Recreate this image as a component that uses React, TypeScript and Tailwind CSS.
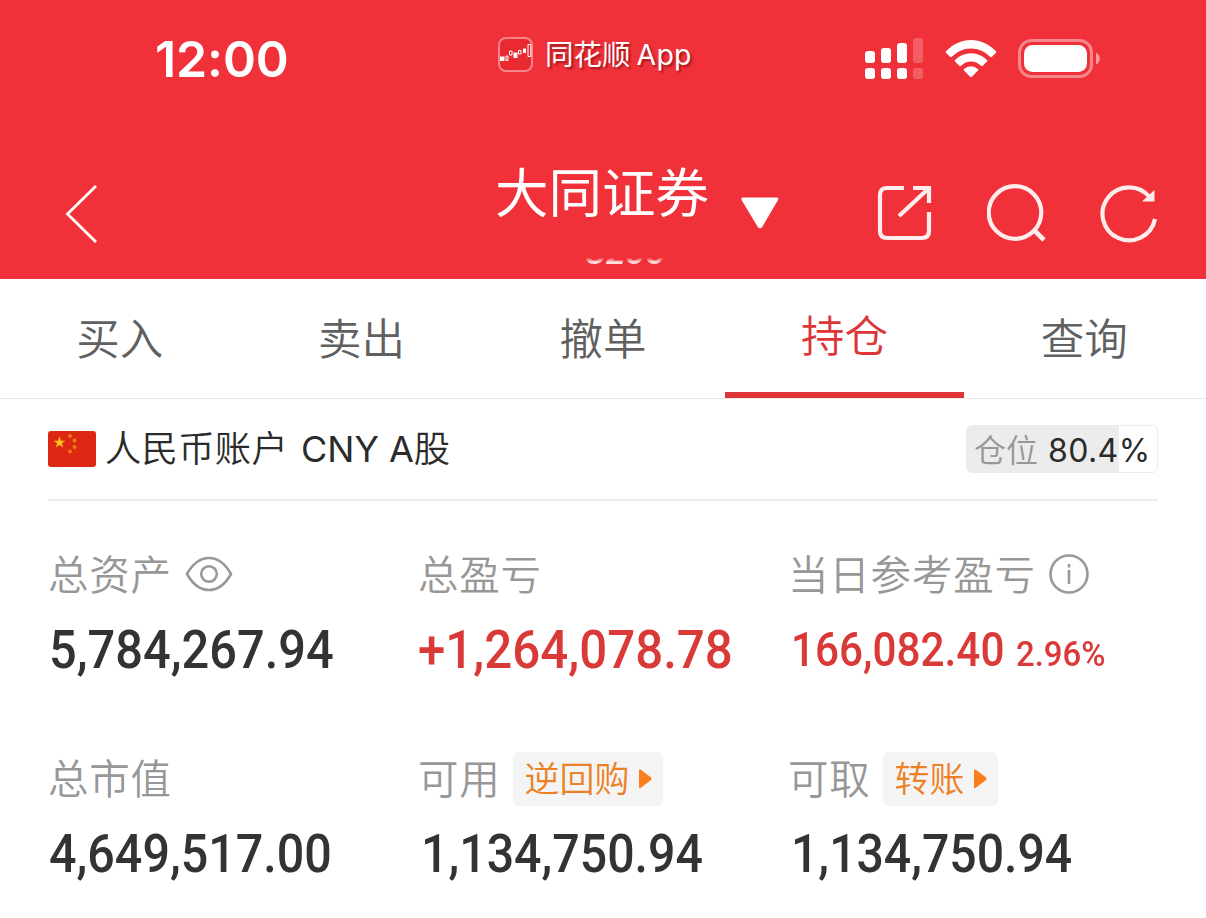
import type { ReactNode } from "react";

const CJK = "font-['Inter','Noto_Sans_CJK_SC',sans-serif]";

function StatusBar() {
  return (
    <div className="flex h-[118px] items-start">
      <div className="ml-[155px] mt-[29px] h-[60px] w-[343px] text-[50px] leading-[60px] font-semibold tracking-[-0.100px]">12:00</div>
      <div className="mt-[36px] flex h-[36px] w-[367px] items-center">
        <svg width="35" height="35" viewBox="0 0 35 35" fill="none">
          <rect x="1" y="1" width="33" height="33" rx="7" fill="#e92a31" stroke="#fff" strokeOpacity=".42" strokeWidth="2" />
          <path d="M2 19.500h4.500v4.500H2zM15.500 15.500h4v5.500h-4zM25 11.500h3v4.500h-3z" fill="#fff" />
          <path d="M8 19h2v4.500h-2zM11.500 14h2.500v4h-2.500zM20.500 13.500h2.500v3.500h-2.500zM30 7.500h2.800v12H30z" stroke="#fff" strokeWidth="1" />
        </svg>
        <span className="ml-[12px] pt-[1px] text-[28.500px] leading-[36px] whitespace-nowrap [text-shadow:2px_2px_2px_rgba(90,0,0,0.5)]">
          同花顺<span className="ml-[6px] tracking-[0.2px]">App</span>
        </span>
      </div>
      <svg className="mt-[36px]" width="58" height="44" viewBox="0 0 58 44" fill="#fff">
        <rect x="0" y="15" width="10" height="12" rx="3" />
        <rect x="16" y="12" width="10" height="15" rx="3" />
        <rect x="32" y="7" width="10" height="20" rx="3" />
        <rect x="48" y="2" width="10" height="25" rx="3" opacity=".22" />
        <rect x="0" y="32" width="10" height="11" rx="3" />
        <rect x="16" y="32" width="10" height="11" rx="3" />
        <rect x="32" y="32" width="10" height="11" rx="3" />
        <rect x="48" y="32" width="10" height="11" rx="3" opacity=".22" />
      </svg>
      <svg className="ml-[22px] mt-[38px]" width="52" height="40" viewBox="0 0 52 40" fill="#fff">
        <path d="M1 13.200C8 6 16.500 2 26 2s18 4 25 11.200q.6.8 0 1.600l-4 4q-.9.7-1.800 0C39.500 13.500 33.500 10.500 26 10.500S12.500 13.500 6.800 18.800q-.9.7-1.800 0l-4-4q-.6-.8 0-1.600z" />
        <path d="M10 22C14.500 17.500 20 15.200 26 15.200S37.500 17.500 42 22q.6.8 0 1.600l-4.200 4.200q-.9.7-1.800 0C33 25 30 23.500 26 23.500S19 25 16 27.800q-.9.7-1.800 0L10 23.600q-.6-.8 0-1.600z" />
        <path d="M19 31q7-5.500 14 0 .7.800 0 1.600l-6.100 6.200q-.9.800-1.800 0L19 32.600q-.7-.8 0-1.600z" />
      </svg>
      <svg className="ml-[21px] mt-[39px]" width="83" height="40" viewBox="0 0 83 40" fill="none">
        <rect x="1.500" y="1.500" width="72" height="36" rx="12" stroke="#fff" strokeOpacity=".42" strokeWidth="3" />
        <rect x="6" y="6" width="63" height="27" rx="8.500" fill="#fff" />
        <path d="M78 13.500q3.800 2 3.800 6t-3.800 6z" fill="#fff" fillOpacity=".5" />
      </svg>
    </div>
  );
}

function NavBar() {
  return (
    <div className="flex h-[161px] items-start">
      <svg className="ml-[64px] mt-[65px]" width="36" height="62" viewBox="0 0 36 62" fill="none" stroke="#fff" strokeWidth="2.800">
        <path d="M32 3 3.500 31 32 59" />
      </svg>
      <div className="ml-[395px] mt-[46px] w-[214px]">
        <div className="h-[60px] text-[53.500px] leading-[60px] whitespace-nowrap">大同证券</div>
        <div className="mt-[11px] ml-[90px] h-[34px] bg-linear-to-b from-transparent from-66% to-[#ffe0e0] to-80% bg-clip-text text-[33px] leading-[34px] font-semibold tracking-[-0.800px] whitespace-nowrap text-transparent italic">3299</div>
      </div>
      <svg className="ml-[31px] mt-[78px]" width="40" height="34" viewBox="0 0 40 34" fill="#fff">
        <path d="M3 1.500h34q2 .5 1 2.600L22.200 31q-2.200 2.600-4.400 0L1.600 4.100Q.8 2 3 1.500z" />
      </svg>
      <svg className="ml-[97px] mt-[67px]" width="58" height="58" viewBox="0 0 58 58" fill="none" stroke="#ffecec" strokeWidth="4.200">
        <path d="M27 3H10Q3 3 3 10v36q0 7 7 7h35q7 0 7-7V27" />
        <path d="M36 3h16v15M51 4 22 31" />
      </svg>
      <svg className="ml-[52px] mt-[66px]" width="62" height="62" viewBox="0 0 62 62" fill="none" stroke="#ffecec" strokeWidth="4.200">
        <circle cx="28" cy="28.500" r="26.300" />
        <path d="m47 46 10 10" strokeWidth="4.600" />
      </svg>
      <svg className="ml-[51px] mt-[65px]" width="60" height="62" viewBox="0 0 60 62" fill="none" stroke="#ffecec" strokeWidth="4.200">
        <path d="M55 36A26.500 26.500 0 1 1 49.500 14" />
        <path d="M54.500 7v11.500H42z" fill="#ffecec" stroke="none" />
      </svg>
    </div>
  );
}

function Tab({ label, active }: { label: string; active?: boolean }) {
  return (
    <div
      className={
        active
          ? "flex-1 border-b-6 border-[#dd3538] pt-[25px] text-center text-[#dd3538]"
          : "flex-1 pt-[28px] pr-[2px] text-center text-[#606060]"
      }
    >
      <span className="block text-[43.500px] leading-[64px] font-[350]">{label}</span>
    </div>
  );
}

function Figure({ children, className }: { children: ReactNode; className: string }) {
  return (
    <span className={`block origin-left font-['Roboto',sans-serif] font-medium whitespace-nowrap ${className}`}>
      {children}
    </span>
  );
}

function Label({ children }: { children: ReactNode }) {
  return <span className="pt-[2px] text-[40.500px] leading-[54px] font-[350] tracking-[0.800px] whitespace-nowrap text-[#979797]">{children}</span>;
}

function Chip({ children }: { children: ReactNode }) {
  return (
    <span className="ml-[12px] flex h-[54px] items-center rounded-[6px] bg-[#f4f4f4] pr-[11px] pl-[12px] text-[35px] leading-[54px] font-[350] whitespace-nowrap text-[#ec8126]">
      {children}
      <svg className="ml-[9px]" width="13" height="20" viewBox="0 0 13 20" fill="#fb7d1b">
        <path d="M0 1.500Q0 0 1.500.6l10.500 8q1 1.200 0 2.400l-10.500 8Q0 19.600 0 18z" />
      </svg>
    </span>
  );
}

export default function App() {
  return (
    <div className={`h-[918px] w-[1206px] overflow-hidden bg-white ${CJK}`}>
      <header className="h-[279px] bg-[#f03139] text-white">
        <StatusBar />
        <NavBar />
      </header>
      <nav className="flex h-[120px] border-b border-[#e8e8e8] [&>*]:h-[119px]">
        <Tab label="买入" />
        <Tab label="卖出" />
        <Tab label="撤单" />
        <Tab label="持仓" active />
        <Tab label="查询" />
      </nav>
      <main className="px-[48px]">
        <div className="flex h-[102px] items-center border-b-2 border-[#ececec]">
          <svg width="48" height="36" viewBox="0 0 48 36">
            <rect width="48" height="36" rx="3" fill="#dd2913" />
            <path d="m11.500 5.500 1.500 4.200h4.400l-3.500 2.600 1.300 4.300-3.700-2.600-3.600 2.600 1.300-4.300-3.500-2.600h4.400z" fill="#fcc515" />
            <g fill="#ec7b16">
              <circle cx="22" cy="5" r="1.900" />
              <circle cx="26.500" cy="9.500" r="1.900" />
              <circle cx="26.500" cy="16" r="1.900" />
              <circle cx="22" cy="20.500" r="1.900" />
            </g>
          </svg>
          <span className="ml-[9px] text-[36.300px] leading-[50px] whitespace-nowrap text-[#2b2b2b]">
            <span className="font-[350] tracking-[0.300px]">人民币账户</span>
            <span className="ml-[13px] text-[36px]">CNY A</span>
            <span className="font-[350]">股</span>
          </span>
          <div className="ml-auto flex h-[48px] w-[192px] items-center rounded-[6px] border border-[#ececec] bg-linear-to-r from-[#ececec] from-80% to-white to-80% pt-[3px] pl-[7px] leading-[46px] whitespace-nowrap">
            <span className="text-[32px] font-[350] text-[#979797]">仓位</span>
            <span className="ml-[10px] text-[32px] tracking-[0.400px] text-[#2b2b2b]">80.4%</span>
          </div>
        </div>
        <div className="grid grid-cols-[370px_370px_370px] text-[#333]">
          <section className="h-[204px] pt-[47px]">
            <div className="flex h-[54px] items-center">
              <Label>总资产</Label>
              <svg className="mb-[2px] ml-[13px]" width="48" height="36" viewBox="0 0 48 36" fill="none" stroke="#999" strokeWidth="2.600">
                <path d="M2 18Q11 2 24 2t22 16Q37 34 24 34T2 18z" />
                <circle cx="24" cy="18" r="7.800" />
              </svg>
            </div>
            <Figure className="mt-[13px] ml-[1px] text-[53.500px] leading-[70px] scale-x-[0.911]">5,784,267.94</Figure>
          </section>
          <section className="h-[204px] pt-[47px]">
            <div className="flex h-[54px] items-center"><Label>总盈亏</Label></div>
            <Figure className="mt-[13px] text-[53.500px] leading-[70px] scale-x-[0.920] text-[#d93a38]">+1,264,078.78</Figure>
          </section>
          <section className="h-[204px] pt-[47px]">
            <div className="flex h-[54px] items-center">
              <Label>当日参考盈亏</Label>
              <svg className="mb-[2px] ml-[13px]" width="40" height="40" viewBox="0 0 40 40" fill="none" stroke="#999" strokeWidth="2.600">
                <circle cx="20" cy="20" r="18.500" />
                <path d="M20 16v14M20 10v3.500" />
              </svg>
            </div>
            <div className="mt-[13px] flex h-[70px] text-[#d93a38]">
              <div className="w-[227px] pl-[3px]"><Figure className="text-[47.500px] leading-[70px] scale-x-[0.890]">166,082.40</Figure></div>
              <Figure className="pt-[5px] pl-[1px] text-[35px] leading-[70px] scale-x-[0.940]">2.96%</Figure>
            </div>
          </section>
          <section className="h-[204px] pt-[47px]">
            <div className="flex h-[54px] items-center"><Label>总市值</Label></div>
            <Figure className="mt-[13px] ml-[1px] text-[53.500px] leading-[70px] scale-x-[0.905]">4,649,517.00</Figure>
          </section>
          <section className="h-[204px] pt-[47px]">
            <div className="flex h-[54px] items-center"><Label>可用</Label><Chip>逆回购</Chip></div>
            <Figure className="mt-[13px] ml-[3px] text-[53.500px] leading-[70px] scale-x-[0.902]">1,134,750.94</Figure>
          </section>
          <section className="h-[204px] pt-[47px]">
            <div className="flex h-[54px] items-center"><Label>可取</Label><Chip>转账</Chip></div>
            <Figure className="mt-[13px] ml-[3px] text-[53.500px] leading-[70px] scale-x-[0.900]">1,134,750.94</Figure>
          </section>
        </div>
      </main>
    </div>
  );
}
